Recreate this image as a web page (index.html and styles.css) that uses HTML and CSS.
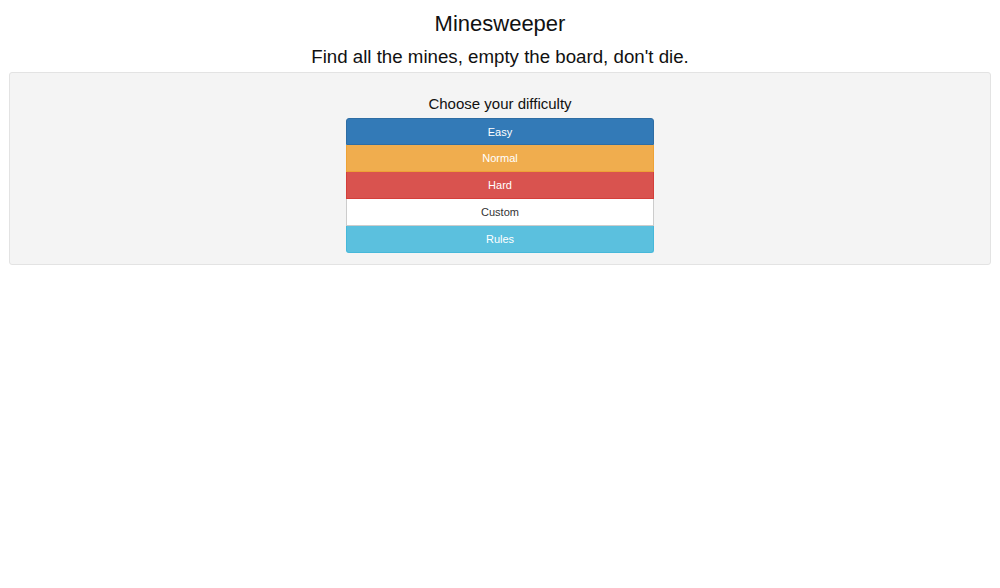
FILE: index.html
```html
<!DOCTYPE html>
<html>
<head>
<meta charset="utf-8">
<link rel="stylesheet" href="styles.css">
</head>
<body>
<div class="page">
  <h1 class="title">Minesweeper</h1>
  <h2 class="subtitle">Find all the mines, empty the board, don't die.</h2>
  <div class="well">
    <div class="prompt">Choose your difficulty</div>
    <div class="btn-group">
      <button class="btn btn-easy">Easy</button>
      <button class="btn btn-normal">Normal</button>
      <button class="btn btn-hard">Hard</button>
      <button class="btn btn-custom">Custom</button>
      <button class="btn btn-rules">Rules</button>
    </div>
  </div>
</div>
</body>
</html>
```

FILE: styles.css
```css
html, body {
  margin: 0;
  padding: 0;
  background: #fff;
}
body {
  font-family: "Liberation Sans", Arial, Helvetica, sans-serif;
  color: #111;
}
.page {
  padding: 0 9px;
  display: flex;
  flex-direction: column;
  align-items: stretch;
}
.title {
  margin: 11px 0 0;
  font-size: 22px;
  line-height: 25px;
  font-weight: normal;
  text-align: center;
}
.subtitle {
  margin: 10px 0 0;
  font-size: 18.7px;
  line-height: 22px;
  font-weight: normal;
  text-align: center;
}
.well {
  margin-top: 4px;
  background: #f4f4f4;
  border: 1px solid #e3e3e3;
  border-radius: 3px;
  padding: 22px 0 11px;
  display: flex;
  flex-direction: column;
  align-items: center;
}
.prompt {
  font-size: 15px;
  line-height: 18px;
  color: #111;
  margin-bottom: 5px;
}
.btn-group {
  display: flex;
  flex-direction: column;
  width: 308px;
}
.btn {
  box-sizing: border-box;
  height: 27px;
  margin: 0;
  padding: 0;
  font-family: "Liberation Sans", Arial, Helvetica, sans-serif;
  font-size: 11px;
  color: #fff;
  border: 1px solid transparent;
  border-top-width: 0;
  border-radius: 0;
  text-align: center;
  cursor: pointer;
}
.btn:first-child {
  border-top-width: 1px;
  border-radius: 3px 3px 0 0;
}
.btn:last-child {
  border-radius: 0 0 3px 3px;
}
.btn-easy { background: #337ab7; border-color: #2e6da4; }
.btn-normal { background: #f0ad4e; border-color: #eea236; }
.btn-hard { background: #d9534f; border-color: #d43f3a; }
.btn-custom { background: #fff; border-color: #ccc; color: #333; }
.btn-rules { background: #5bc0de; border-color: #46b8da; }
```
